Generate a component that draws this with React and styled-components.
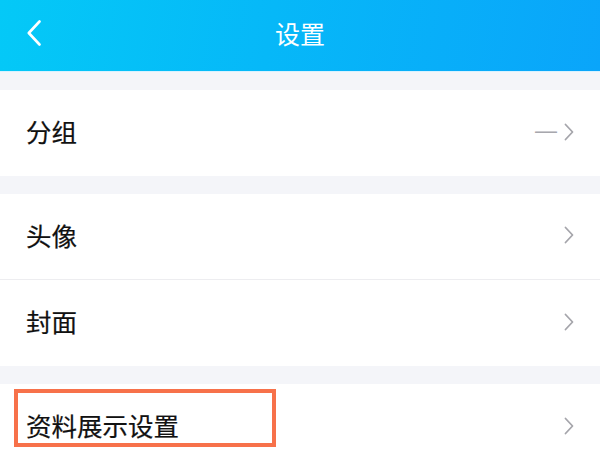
import React from "react";
import styled, { createGlobalStyle } from "styled-components";

const GlobalStyle = createGlobalStyle`
  html, body {
    margin: 0;
    padding: 0;
    background: #f4f5f9;
    font-family: "Noto Sans CJK SC", "Noto Sans", sans-serif;
  }
`;

const Page = styled.div`
  width: 600px;
  height: 450px;
  overflow: hidden;
  background: #f4f5f9;
`;

const Header = styled.div`
  position: relative;
  height: 72px;
  display: flex;
  align-items: center;
  justify-content: center;
  background: linear-gradient(100deg, #04c9f7 0%, #06b8f8 45%, #0aa5fa 100%);
  border-bottom: 1px solid #d8f2ff;
  box-sizing: border-box;
`;

const BackButton = styled.div`
  position: absolute;
  left: 27px;
  top: 20px;
  width: 14px;
  height: 26px;
  display: flex;
`;

const Title = styled.div`
  color: #fff;
  font-size: 25px;
  line-height: 1;
  margin-top: -4px;
`;

const Group = styled.div`
  margin-top: 18px;
  background: #fff;
`;

const Row = styled.div`
  position: relative;
  height: ${(p) => p.$height || 86}px;
  display: flex;
  align-items: center;
  padding: 0 26px 0 26px;
  border-top: ${(p) => (p.$divider ? "1px solid #ededf0" : "none")};
`;

const Label = styled.div`
  flex: 1;
  font-size: 25.5px;
  color: #111;
  line-height: 1;
  margin-top: -4px;
  -webkit-text-stroke: 0.2px #111;
`;

const Value = styled.span`
  color: #a7a7ad;
  font-family: "Liberation Sans", sans-serif;
  font-size: 22px;
  margin-right: 7px;
  margin-top: -5px;
`;

const Highlight = styled.div`
  position: absolute;
  left: 14px;
  top: 5px;
  width: 262px;
  height: 58px;
  border: 4px solid #f7714a;
  box-sizing: border-box;
  pointer-events: none;
`;

const Chevron = () => (
  <svg width="10" height="18" viewBox="0 0 10 18" style={{ marginTop: -3 }}>
    <path d="M1.5 1.5 L8.5 9 L1.5 16.5" fill="none" stroke="#a5a5ab" strokeWidth="1.8" strokeLinecap="round" strokeLinejoin="round" />
  </svg>
);

const App = () => {
  return (
    <Page>
      <GlobalStyle />
      <Header>
        <BackButton>
          <svg width="14" height="26" viewBox="0 0 14 26">
            <path d="M12.5 1.5 L1.8 13 L12.5 24.5" fill="none" stroke="#fff" strokeWidth="2.6" strokeLinecap="round" strokeLinejoin="round" />
          </svg>
        </BackButton>
        <Title>设置</Title>
      </Header>

      <Group>
        <Row>
          <Label>分组</Label>
          <Value>—</Value>
          <Chevron />
        </Row>
      </Group>

      <Group>
        <Row $height={85}>
          <Label>头像</Label>
          <Chevron />
        </Row>
        <Row $divider>
          <Label>封面</Label>
          <Chevron />
        </Row>
      </Group>

      <Group>
        <Row>
          <Label>资料展示设置</Label>
          <Chevron />
          <Highlight />
        </Row>
      </Group>
    </Page>
  );
};

export default App;
